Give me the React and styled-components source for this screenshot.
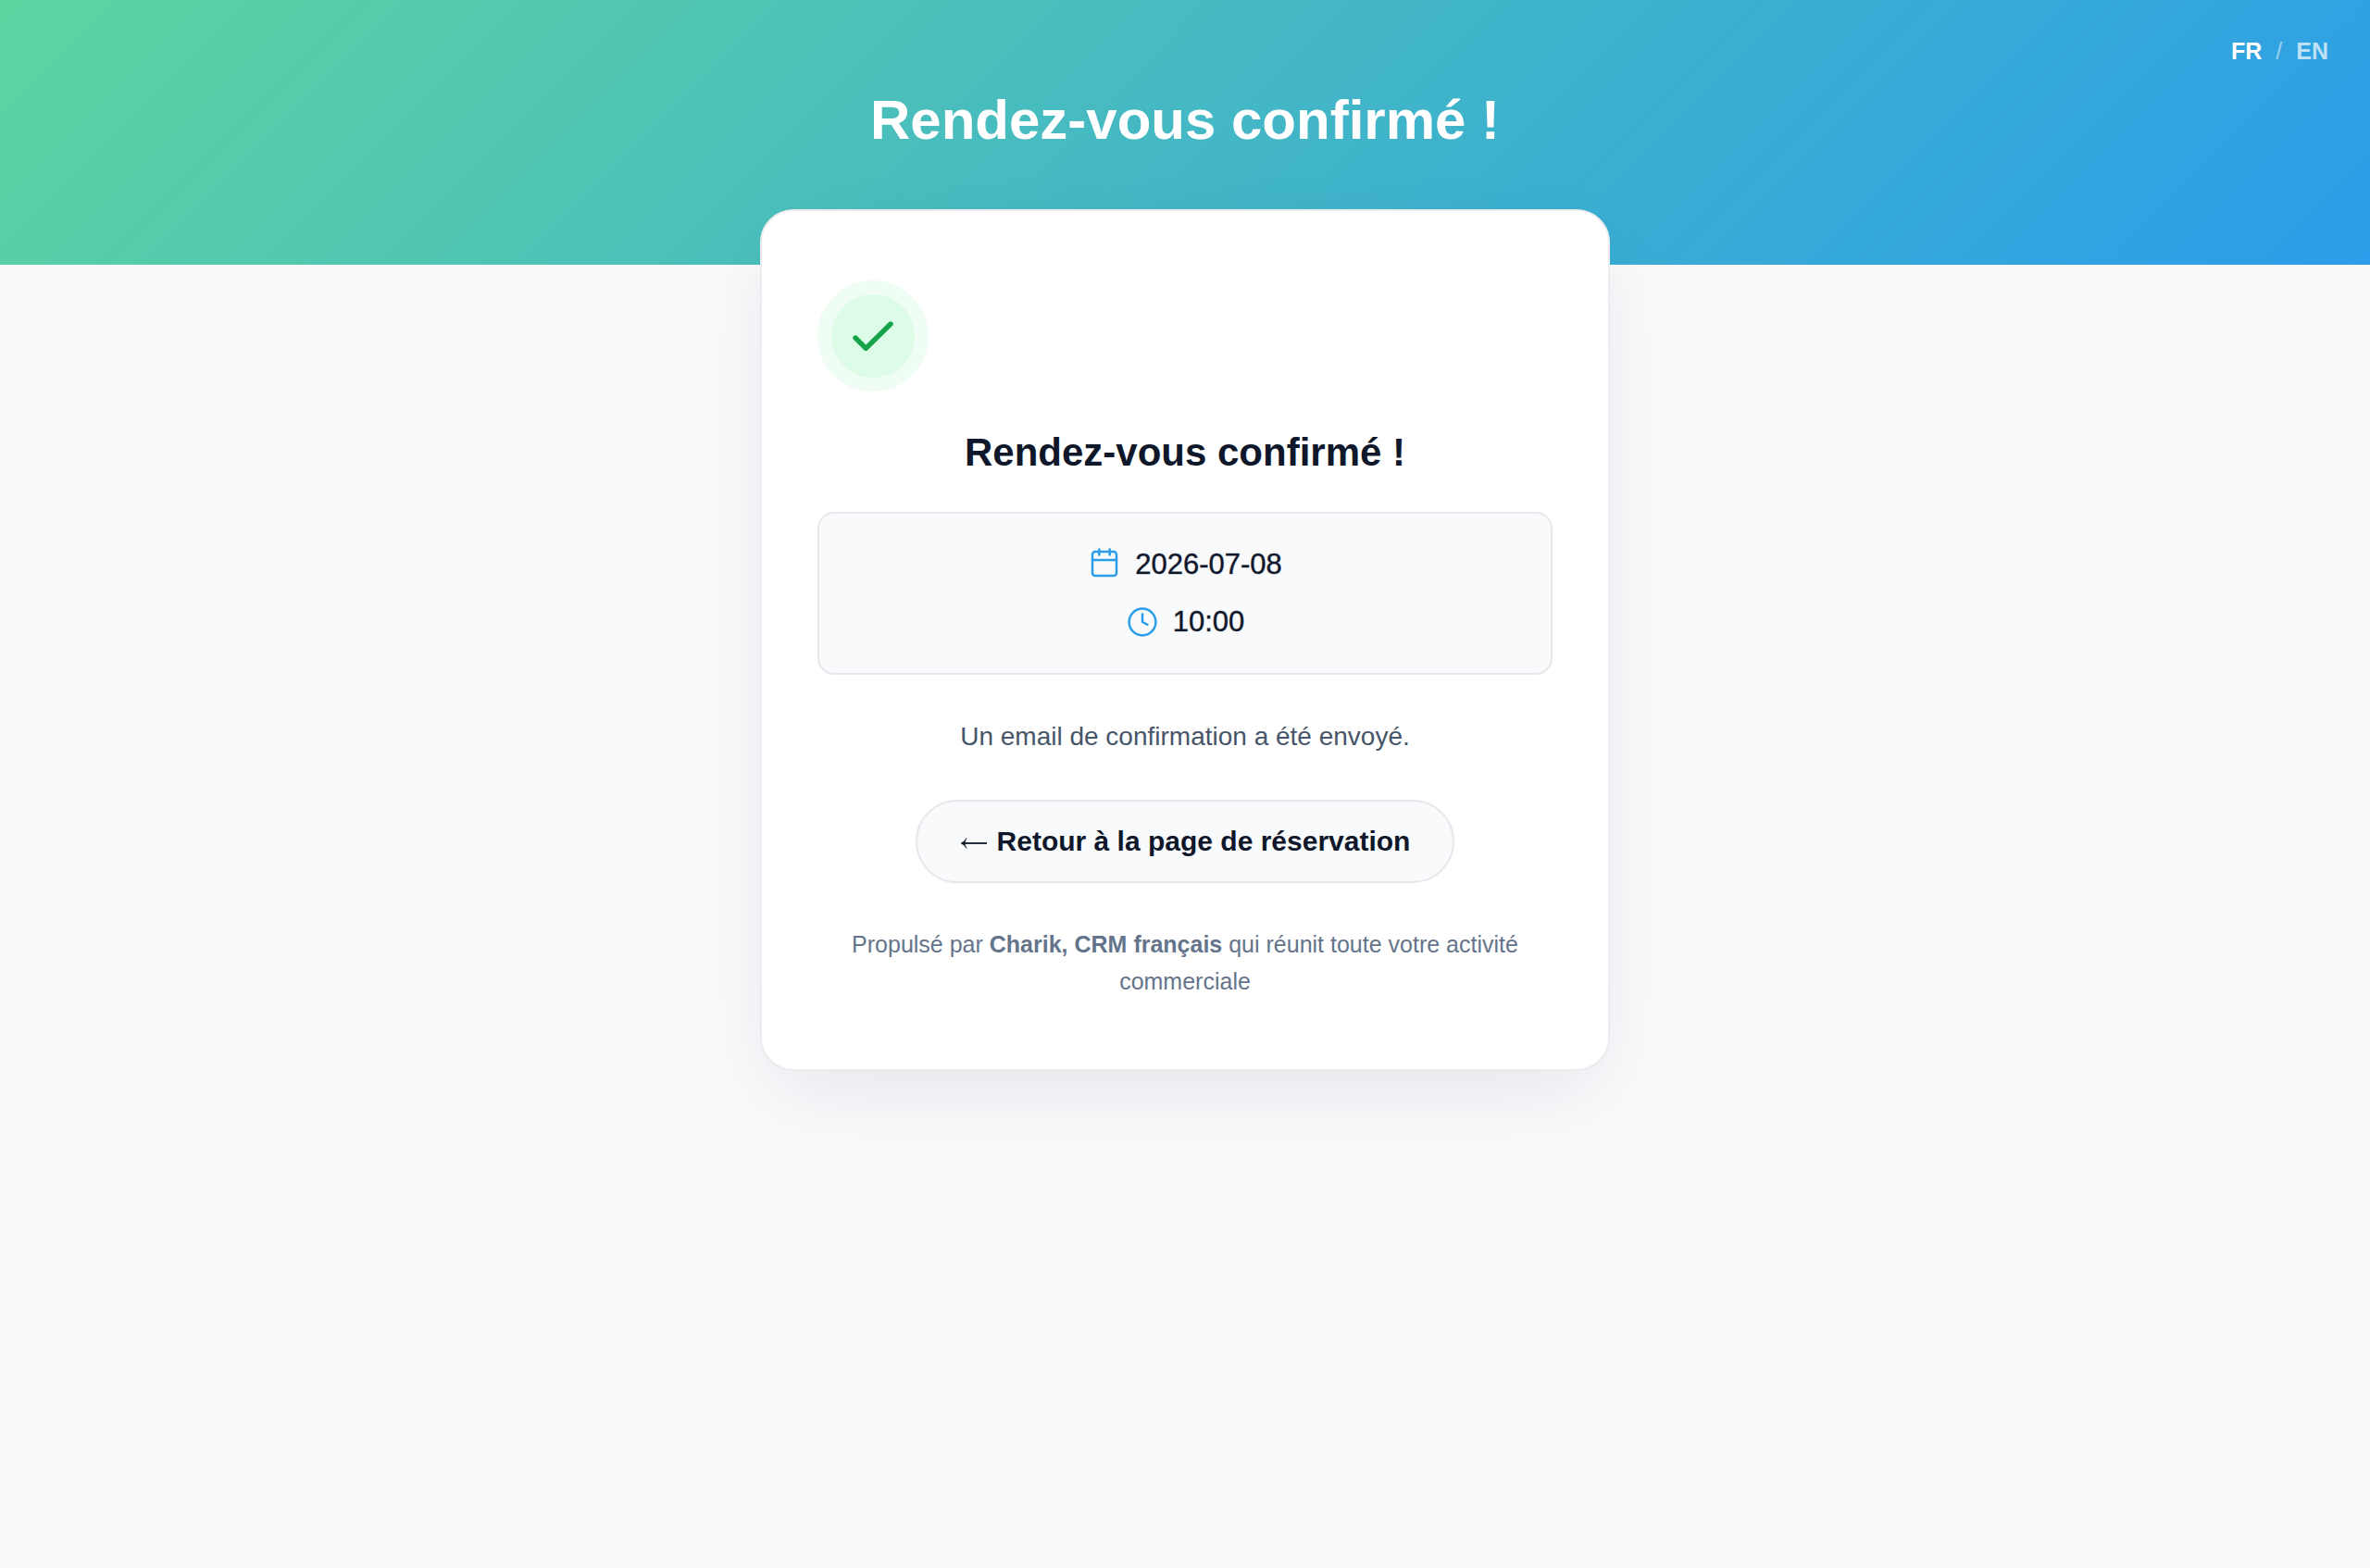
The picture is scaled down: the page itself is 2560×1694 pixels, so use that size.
import React, { useState } from "react";
import styled, { createGlobalStyle } from "styled-components";

const GlobalStyle = createGlobalStyle`
  * {
    box-sizing: border-box;
  }
  body {
    margin: 0;
    background: #f9fafc;
    color: #0f172a;
    font-family: "Liberation Sans", Arial, Helvetica, sans-serif;
  }
`;

const Page = styled.div`
  min-height: 100vh;
  display: flex;
  flex-direction: column;
`;

const Header = styled.header`
  position: relative;
  height: 286px;
  padding-top: 94px;
  background: linear-gradient(135deg, #5dd5a0 0%, #44b8c4 50%, #2b9dea 100%);
`;

const Title = styled.h1`
  margin: 0;
  font-size: 60px;
  line-height: 72px;
  text-align: center;
  color: #fff;
`;

const LangNav = styled.nav`
  position: absolute;
  top: 39px;
  right: 45px;
  display: flex;
  gap: 15px;
  font-size: 25px;
  line-height: 32px;
  color: rgba(255, 255, 255, 0.5);
`;

const LangLink = styled.a`
  color: ${(props) => (props.$active ? "#fff" : "rgba(255, 255, 255, 0.7)")};
  font-weight: bold;
  text-decoration: none;
`;

const Card = styled.main`
  position: relative;
  width: 918px;
  max-width: calc(100% - 40px);
  margin: -60px auto 60px;
  padding: 75px 60px;
  display: flex;
  flex-direction: column;
  align-items: center;
  text-align: center;
  background: #fff;
  border: 2px solid #ececef;
  border-radius: 36px;
  box-shadow: 0 30px 90px -18px rgba(15, 23, 42, 0.1);
`;

const Badge = styled.div`
  align-self: flex-start;
  width: 120px;
  height: 120px;
  display: flex;
  align-items: center;
  justify-content: center;
  background: #dcfce7;
  border: 15px solid #f0fdf4;
  border-radius: 50%;
`;

const SubTitle = styled.h2`
  margin: 41px 0 39px;
  font-size: 42px;
  line-height: 50px;
`;

const Details = styled.div`
  width: 100%;
  padding: 24px;
  display: flex;
  flex-direction: column;
  background: #f9fafc;
  border: 2px solid #e7e8ec;
  border-radius: 18px;
`;

const DetailRow = styled.div`
  height: 62px;
  display: flex;
  align-items: center;
  justify-content: center;
  gap: 15px;
  font-size: 31px;
  font-weight: 500;
  line-height: 62px;
  /* the font has no medium weight */
  -webkit-text-stroke: 1px rgba(15, 23, 42, 0.4);
`;

const Message = styled.p`
  margin: 47px 0 48px;
  font-size: 28px;
  line-height: 40px;
  color: #475569;
`;

const BackLink = styled.a`
  height: 90px;
  padding: 0 46px;
  display: flex;
  align-items: center;
  gap: 10px;
  font-size: 30px;
  font-weight: bold;
  color: #0f172a;
  text-decoration: none;
  background: #f9fafc;
  border: 2px solid #e7e8ec;
  border-radius: 45px;
`;

const Powered = styled.p`
  margin: 46px 0 0;
  font-size: 25px;
  line-height: 40px;
  color: #64748b;
`;

const Check = () => (
  <svg width="44" height="32" viewBox="0 0 44 32" fill="none" stroke="#16a34a" strokeWidth="5.4" strokeLinecap="round" strokeLinejoin="round">
    <path d="M3 18 L14.3 29.3 L41 3" />
  </svg>
);

const Calendar = () => (
  <svg width="36" height="36" viewBox="0 0 36 36" fill="none" stroke="#2b9dea" strokeWidth="2.5" strokeLinecap="round" strokeLinejoin="round">
    <rect x="5" y="4" width="26" height="26" rx="3" />
    <path d="M12.3 1.5v6M23.7 1.5v6M5 13h26" />
  </svg>
);

const Clock = () => (
  <svg width="36" height="36" viewBox="0 0 36 36" fill="none" stroke="#2b9dea" strokeWidth="2.5" strokeLinecap="round" strokeLinejoin="round">
    <circle cx="18" cy="18" r="14.4" />
    <path d="M18 9.5v8.5l5.5 2.8" />
  </svg>
);

const Arrow = () => (
  <svg width="30" height="18" viewBox="0 0 30 18" fill="none" stroke="#0f172a">
    <path d="M2 11h27" strokeWidth="1.8" />
    <path d="M7 5.5Q5 9.5 1 11Q5 12.5 7 16.5Q5.5 13.5 5 11Q5.5 8.5 7 5.5z" fill="#0f172a" strokeWidth="0.6" />
  </svg>
);

export default function App() {
  const [lang, setLang] = useState("fr");

  return (
    <Page>
      <GlobalStyle />
      <Header>
        <Title>Rendez-vous confirmé !</Title>
        <LangNav>
          <LangLink href="#fr" $active={lang === "fr"} onClick={() => setLang("fr")}>FR</LangLink>
          <span>/</span>
          <LangLink href="#en" $active={lang === "en"} onClick={() => setLang("en")}>EN</LangLink>
        </LangNav>
      </Header>
      <Card>
        <Badge>
          <Check />
        </Badge>
        <SubTitle>Rendez-vous confirmé !</SubTitle>
        <Details>
          <DetailRow>
            <Calendar />
            <span>2026-07-08</span>
          </DetailRow>
          <DetailRow>
            <Clock />
            <span>10:00</span>
          </DetailRow>
        </Details>
        <Message>Un email de confirmation a été envoyé.</Message>
        <BackLink href="#reservation">
          <Arrow />
          <span>Retour à la page de réservation</span>
        </BackLink>
        <Powered>
          Propulsé par <strong>Charik, CRM français</strong> qui réunit toute votre activité commerciale
        </Powered>
      </Card>
    </Page>
  );
}
